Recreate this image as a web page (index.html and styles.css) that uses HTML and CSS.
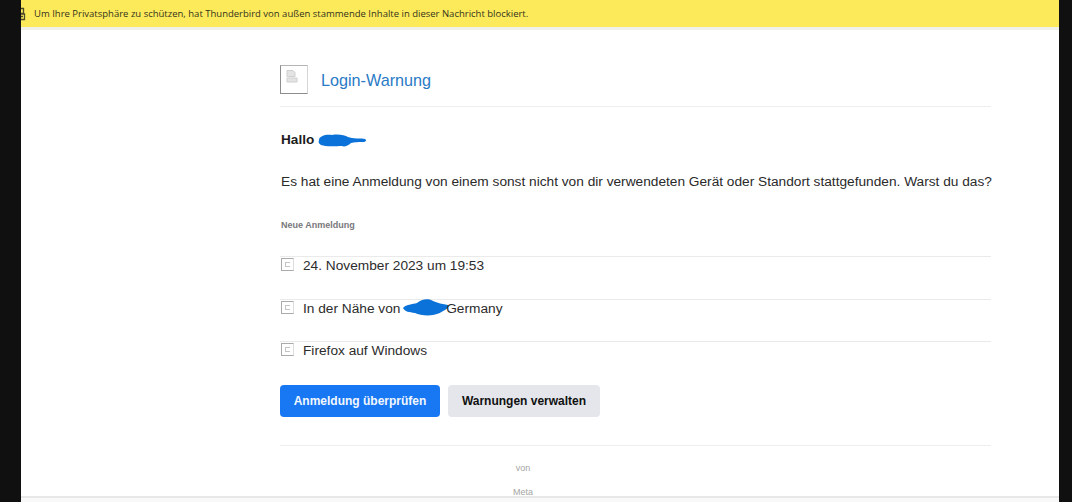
FILE: index.html
```html
<!DOCTYPE html>
<html lang="de">
<head>
<meta charset="utf-8">
<title>Login-Warnung</title>
<link rel="stylesheet" href="styles.css">
</head>
<body>
<div class="window">
  <div class="notice">
    <svg class="notice-icon" width="10" height="14" viewBox="0 0 10 14"><path d="M2.500 1.500h5v5h-5zM1.500 7h7v5.500h-7zM3 9.500h4" fill="none" stroke="#4a4a2a" stroke-width="1.300"/></svg>
    <span>Um Ihre Privatsphäre zu schützen, hat Thunderbird von außen stammende Inhalte in dieser Nachricht blockiert.</span>
  </div>
  <main class="mail">
    <header class="mail-head">
      <span class="logo-box">
        <svg width="12" height="13" viewBox="0 0 12 13"><path d="M1 .5h6l2 2v4H1zM1 8h10v4H1z" fill="#e4e4e4" stroke="#cfcfcf"/></svg>
      </span>
      <h1 class="title">Login-Warnung</h1>
    </header>
    <p class="greeting">Hallo <svg class="blob-name" width="49" height="13" viewBox="0 0 49 13"><path d="M1 6C1 2 8 0 14 1c6-1 13 0 16 2 4 2 14 1 17 2 2 1 1 3-2 3-5 0-9 0-12 1-3 3-7 4-9 3-6 0-16 1-21-1C1 10 0 8 1 6z" fill="#0a72d8"/></svg></p>
    <p class="lead">Es hat eine Anmeldung von einem sonst nicht von dir verwendeten Gerät oder Standort stattgefunden. Warst du das?</p>
    <h2 class="section-label">Neue Anmeldung</h2>
    <ul class="facts">
      <li class="fact"><span class="fact-icon"><i class="fact-glyph"></i></span><span>24. November 2023 um 19:53</span></li>
      <li class="fact"><span class="fact-icon"><i class="fact-glyph"></i></span><span class="fact-text">In der Nähe von <svg class="blob-place" width="46" height="18" viewBox="0 0 46 18"><path d="M0 10c2-3 10-4 14-5 4-4 12-5 16-2 4 2 10 3 15 4 1 2-1 4-3 5-4 2-6 4-12 5-6 1-14 0-18-2-6-1-10-1-12-5z" fill="#0a72d8"/></svg>Germany</span></li>
      <li class="fact"><span class="fact-icon"><i class="fact-glyph"></i></span><span>Firefox auf Windows</span></li>
    </ul>
    <div class="actions">
      <a class="btn btn-primary">Anmeldung überprüfen</a>
      <a class="btn btn-secondary">Warnungen verwalten</a>
    </div>
    <footer class="mail-foot">
      <span>von</span>
      <span>Meta</span>
    </footer>
  </main>
  <div class="bottom-bar"></div>
</div>
</body>
</html>
```
FILE: styles.css
```css
* { box-sizing: border-box; }
html, body { margin: 0; height: 100%; overflow: hidden; }
body { background: #101010; padding: 0 13px 0 21px; font-family: "Liberation Sans", Arial, sans-serif; }
.window { position: relative; height: 502px; background: #fff; overflow: hidden; }
.notice {
  height: 30px; display: flex; align-items: center;
  background: #fdea5a; border-bottom: 3px solid #f0f0ea; color: #33331a;
  font: 9.500px "Open Sans", sans-serif;
}
.notice-icon { flex: none; margin-left: -5px; }
.notice span { margin-left: 8px; }
.mail { width: 711px; margin-left: 259px; }
.mail-head { display: flex; align-items: flex-start; gap: 13px; height: 77px; padding-top: 35px; border-bottom: 1px solid #eee; }
.logo-box { width: 28px; height: 29px; border: 1px solid #8d8d8d; border-right-color: #d5d5d5; border-top-color: #b5b5b5; padding: 4px 0 0 5px; display: block; }
.logo-box svg { display: block; }
.title { margin: 6px 0 0; font-size: 16.200px; line-height: 19px; font-weight: 400; color: #2a7ac6; }
.greeting { margin: 25px 0 0 1px; height: 16px; font-size: 13.600px; line-height: 16px; font-weight: 700; color: #1c1c1c; display: flex; align-items: center; gap: 4px; }
.lead { margin: 25px 0 0 1px; font-size: 13.700px; line-height: 18px; color: #2a2a2a; white-space: nowrap; }
.section-label { margin: 28px 0 0 1px; font-size: 9px; line-height: 12px; font-weight: 700; color: #77777c; }
.facts { list-style: none; margin: 25px 0 0; padding: 0; }
.fact { height: 42.500px; border-top: 1px solid #eaeaea; padding-left: 1px; display: flex; align-items: flex-start; gap: 9px; font-size: 13.700px; line-height: 18px; color: #2c2c2c; }
.fact-icon { width: 13px; height: 13px; margin-top: 1px; border: 1px solid #aaa; border-right-color: #ddd; display: flex; align-items: center; justify-content: center; flex: none; }
.fact-glyph { width: 5px; height: 5px; border: 1px solid #c4c4c4; border-right: 0; display: block; }
.fact-text { display: flex; align-items: center; white-space: pre; }
.blob-place { margin: -9px -3px -6px -1px; }
.actions { display: flex; gap: 8px; margin-top: 1px; }
.btn { height: 32px; padding-top: 1px; border-radius: 4px; display: flex; align-items: center; justify-content: center; font-size: 12px; font-weight: 700; }
.btn-primary { width: 160px; background: #1877f2; color: #f2f7ff; }
.btn-secondary { width: 152px; background: #e4e6eb; color: #111; }
.mail-foot { margin-top: 28px; border-top: 1px solid #eee; display: flex; flex-direction: column; align-items: center; gap: 11px; padding: 16px 225px 0 0; font-size: 9px; line-height: 13px; color: #a5a5a5; }
.bottom-bar { position: absolute; left: 0; right: 0; bottom: 0; height: 6px; background: #f8f8f8; border-top: 2px solid #e8e8e8; }
```
